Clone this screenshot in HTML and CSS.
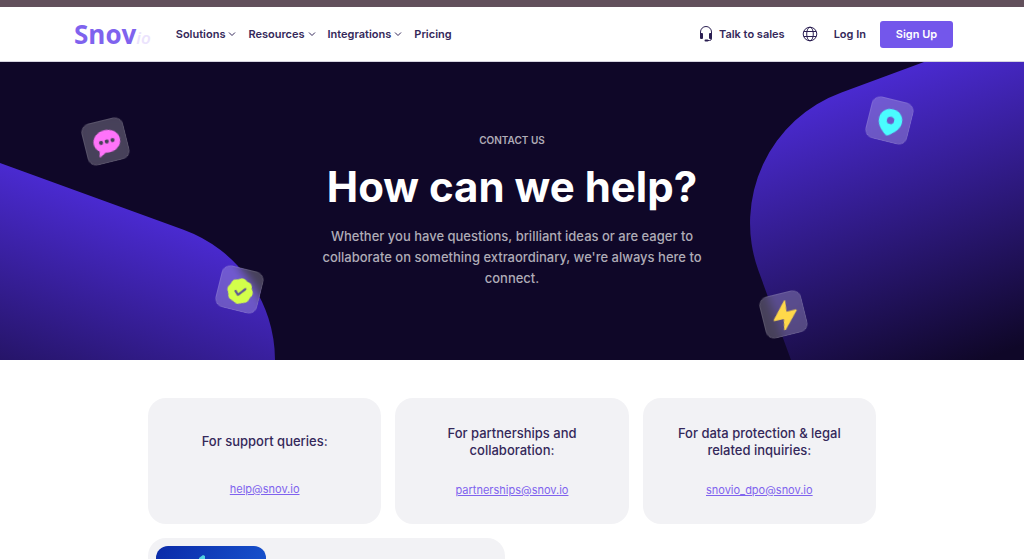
FILE: index.html
```html
<!DOCTYPE html>
<html lang="en">

<head>
    <meta charset="UTF-8">
    <meta name="viewport" content="width=device-width, initial-scale=1.0">
    <title>Contact us | Snov.io</title>
    <link rel="stylesheet" href="styles.css">
</head>

<body>
    <div class="top-bar"></div>

    <header class="header">
        <a href="#" class="logo">Snov<span>io</span></a>
        <nav class="nav">
            <a href="#">Solutions
                <svg class="arrow" viewBox="0 0 8 8"><path d="M1 2.500l3 3 3-3" /></svg>
            </a>
            <a href="#">Resources
                <svg class="arrow" viewBox="0 0 8 8"><path d="M1 2.500l3 3 3-3" /></svg>
            </a>
            <a href="#">Integrations
                <svg class="arrow" viewBox="0 0 8 8"><path d="M1 2.500l3 3 3-3" /></svg>
            </a>
            <a href="#">Pricing</a>
        </nav>
        <div class="actions">
            <a href="#" class="sales">
                <svg class="headset" viewBox="0 0 14 16">
                    <path d="M1.500 9V6a5.500 5.500 0 0 1 11 0V9M12.500 11v1.500a2 2 0 0 1-2 2H8" fill="none" stroke="#2b1f52" />
                    <rect x="1" y="7" width="3" height="6" rx="1" fill="#2b1f52" />
                    <rect x="10" y="7" width="3" height="6" rx="1" fill="#2b1f52" />
                    <rect x="5.500" y="13.500" width="4" height="2" rx="1" fill="#2b1f52" />
                </svg>
                Talk to sales
            </a>
            <button class="lang" aria-label="Language">
                <svg viewBox="0 0 16 16" fill="none" stroke="#2b1f52">
                    <circle cx="8" cy="8" r="6.800" />
                    <ellipse cx="8" cy="8" rx="3.300" ry="6.800" />
                    <path d="M1.800 5.500h12.400M1.800 10.500h12.400" />
                </svg>
            </button>
            <a href="#" class="login">Log In</a>
            <button class="signup">Sign Up</button>
        </div>
    </header>

    <section class="hero">
        <svg class="shape shape-left" viewBox="0 0 276 298">
            <defs>
                <linearGradient id="leftFill" gradientUnits="userSpaceOnUse" x1="0" y1="101" x2="-103" y2="383">
                    <stop offset="0" stop-color="#4a2ad0" />
                    <stop offset="1" stop-color="#0f0728" />
                </linearGradient>
            </defs>
            <path d="M0 101L183.500 167.800A139 139 0 0 1 275 298H0z" fill="url(#leftFill)" />
        </svg>
        <svg class="shape shape-right" viewBox="0 0 274 298">
            <defs>
                <linearGradient id="rightFill" gradientUnits="userSpaceOnUse" x1="174" y1="0" x2="277" y2="282">
                    <stop offset="0" stop-color="#4a2ad0" />
                    <stop offset="1" stop-color="#0f0728" />
                </linearGradient>
            </defs>
            <path d="M174 0L91.500 30.400A139 139 0 0 0 8.400 208.500L41 298H274V0z" fill="url(#rightFill)" />
        </svg>

        <div class="tile tile-chat">
            <svg viewBox="0 0 32 32">
                <path d="M17 3.500C9 3.500 2.500 8.700 2.500 15.700c0 3.500 1.600 6.500 4.300 8.500L5.500 29.500c-.2.800.6 1.300 1.200 1l6-3.200c1.300.3 2.800.5 4.300.5 8 0 14.200-5.200 14.200-12.100S25 3.500 17 3.500z" fill="#ff73fa" />
                <g fill="#484058">
                    <circle cx="10.500" cy="15.800" r="2.200" />
                    <circle cx="16.800" cy="15.800" r="2.200" />
                    <circle cx="23.100" cy="15.800" r="2.200" />
                </g>
            </svg>
        </div>
        <div class="tile tile-check">
            <svg viewBox="0 0 32 32">
                <g fill="#d3ff4a">
                    <circle cx="16.500" cy="17" r="12.800" />
                    <circle cx="16.500" cy="8.200" r="5" />
                    <circle cx="22.700" cy="10.800" r="5" />
                    <circle cx="25.300" cy="17" r="5" />
                    <circle cx="22.700" cy="23.200" r="5" />
                    <circle cx="16.500" cy="25.800" r="5" />
                    <circle cx="10.300" cy="23.200" r="5" />
                    <circle cx="7.700" cy="17" r="5" />
                    <circle cx="10.300" cy="10.800" r="5" />
                </g>
                <path d="M11.800 18l3.400 3.400 6.300-7.800" fill="none" stroke="#5d5496" stroke-width="2.300" stroke-linecap="round" stroke-linejoin="round" />
            </svg>
        </div>
        <div class="tile tile-pin">
            <svg viewBox="0 0 32 32">
                <path fill-rule="evenodd" d="M16.500 3C9.500 3 4 8 4 15c0 7 5 12 10.800 16.200q1.500 1 3 0C23.500 27 29 22 29 15 29 8 23.500 3 16.500 3zm0 8.200a3.900 3.900 0 1 0 0 7.800 3.900 3.900 0 0 0 0-7.800z" fill="#4afcff" />
            </svg>
        </div>
        <div class="tile tile-bolt">
            <svg viewBox="0 0 32 32">
                <path d="M20 1.700L4.500 19.200l11 .4-2.500 12.200L29.500 14.200l-11-.4z" fill="#ffd94a" stroke="#ffd94a" stroke-width="1.500" stroke-linejoin="round" />
            </svg>
        </div>

        <div class="hero-text">
            <p class="label">CONTACT US</p>
            <h1>How can we help?</h1>
            <p class="intro">Whether you have questions, brilliant ideas or are eager to collaborate on something extraordinary, we're always here to connect.</p>
        </div>
    </section>

    <main class="contacts">
        <div class="cards">
            <div class="card">
                <h2>For support queries:</h2>
                <a href="mailto:help@snov.io">help@snov.io</a>
            </div>
            <div class="card">
                <h2>For partnerships and collaboration:</h2>
                <a href="mailto:partnerships@snov.io">partnerships@snov.io</a>
            </div>
            <div class="card">
                <h2>For data protection &amp; legal related inquiries:</h2>
                <a href="mailto:snovio_dpo@snov.io">snovio_dpo@snov.io</a>
            </div>
        </div>
        <div class="offices">
            <div class="office">
                <div class="office-map">
                    <svg viewBox="0 0 110 110">
                        <path d="M43 12l4-3 2 1v4l8 12-4 18 12 20-10 26-18-8 6-30z" fill="#4fd0e0" />
                    </svg>
                </div>
            </div>
        </div>
    </main>
</body>

</html>
```
FILE: styles.css
```css
* {
    margin: 0;
    padding: 0;
    box-sizing: border-box;
}

body {
    font-family: 'Inter', sans-serif;
    color: #34285a;
    background: #fff;
    overflow-x: hidden;
}

a {
    color: inherit;
    text-decoration: none;
}

button {
    font-family: inherit;
    border: none;
    cursor: pointer;
}

.top-bar {
    height: 7px;
    background: #62505c;
}

/* header */
.header {
    display: flex;
    align-items: center;
    height: 55px;
    padding: 0 71px 0 74px;
    border-bottom: 1px solid #d5d3e0;
    font-size: 11px;
    font-weight: 600;
}

.logo {
    font-family: 'Open Sans', sans-serif;
    font-size: 26px;
    font-weight: 700;
    color: #7f63ee;
}

.logo span {
    font-size: 17px;
    font-weight: 600;
    font-style: italic;
    color: #ebe3fd;
}

.nav {
    display: flex;
    gap: 12px;
    margin-left: 25px;
}

.nav a {
    display: flex;
    align-items: center;
    gap: 3px;
}

.arrow {
    width: 8px;
    height: 8px;
    fill: none;
    stroke: #34285a;
}

.actions {
    display: flex;
    align-items: center;
    margin-left: auto;
}

.sales {
    display: flex;
    align-items: center;
    gap: 6px;
}

.headset {
    width: 14px;
    height: 16px;
}

.lang {
    width: 16px;
    height: 16px;
    margin: 0 16px 0 17px;
    background: none;
}

.lang svg {
    display: block;
}

.signup {
    width: 73px;
    height: 27px;
    margin-left: 14px;
    border-radius: 3px;
    font-size: 11px;
    font-weight: 600;
    color: #fff;
    background: #7357eb;
}

/* hero */
.hero {
    position: relative;
    min-height: 298px;
    padding: 71px 20px;
    overflow: hidden;
    background: #0f0728;
}

.shape {
    position: absolute;
    bottom: 0;
    height: 298px;
}

.shape-left {
    left: 0;
}

.shape-right {
    right: 0;
}

.tile {
    position: absolute;
    display: flex;
    align-items: center;
    justify-content: center;
    width: 43px;
    height: 43px;
    border: 1px solid rgba(255, 255, 255, 0.1);
    border-radius: 9px;
    background: rgba(255, 255, 255, 0.23);
    backdrop-filter: blur(5px);
}

.tile svg {
    width: 30px;
    height: 30px;
}

.tile-chat {
    top: 58px;
    left: 84px;
    transform: rotate(-14deg);
}

.tile-check {
    top: 206px;
    left: 218px;
    transform: rotate(14deg);
}

.tile-pin {
    top: 37px;
    right: 113px;
    transform: rotate(14deg);
}

.tile-bolt {
    top: 231px;
    right: 219px;
    transform: rotate(-14deg);
}

.hero-text {
    position: relative;
    max-width: 400px;
    margin: 0 auto;
    text-align: center;
}

.label {
    font-size: 10px;
    line-height: 14px;
    font-weight: 600;
    color: #afacb7;
}

h1 {
    margin-top: 13px;
    font-size: 42px;
    line-height: 54px;
    font-weight: 700;
    color: #fff;
    white-space: nowrap;
}

.intro {
    margin-top: 12px;
    font-size: 13px;
    line-height: 21px;
    font-weight: 500;
    color: #afacb7;
}

/* contacts */
.contacts {
    max-width: 728px;
    margin: 38px auto 0;
}

.cards {
    display: grid;
    grid-template-columns: repeat(3, 1fr);
    gap: 14px;
}

.card {
    display: flex;
    flex-direction: column;
    align-items: center;
    height: 126px;
    padding: 27px 30px;
    border-radius: 18px;
    text-align: center;
    background: #f2f2f5;
}

.card h2 {
    display: flex;
    align-items: center;
    height: 34px;
    font-size: 13px;
    line-height: 17px;
    font-weight: 500;
}

.card a {
    margin-top: 24px;
    font-size: 11px;
    line-height: 15px;
    color: #7f63ee;
    text-decoration: underline;
}

.offices {
    display: grid;
    grid-template-columns: 1fr 1fr;
    gap: 14px;
    margin-top: 14px;
}

.office {
    padding: 8px;
    border-radius: 18px;
    background: #f2f2f5;
}

.office-map {
    width: 110px;
    height: 110px;
    border-radius: 12px;
    background: linear-gradient(120deg, #0a2aa8, #1c62dc);
}
```
